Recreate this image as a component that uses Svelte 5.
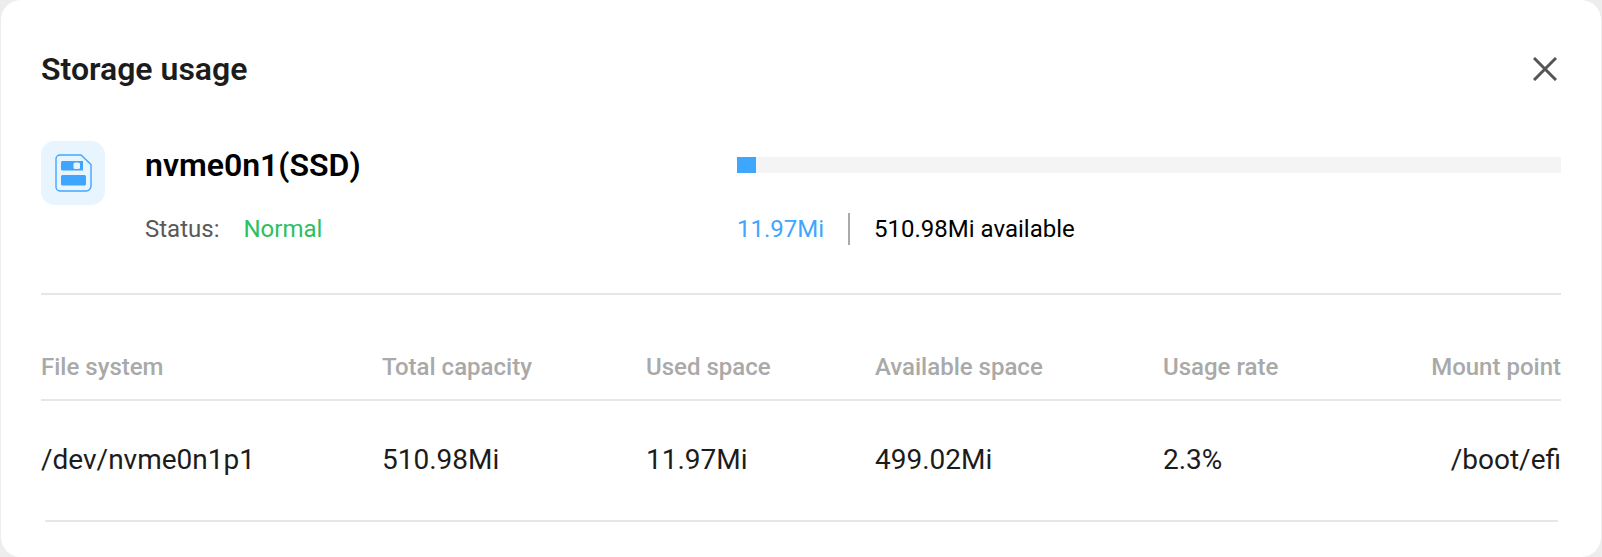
<script>
  const columns = ['File system', 'Total capacity', 'Used space', 'Available space', 'Usage rate', 'Mount point'];
  const rows = [['/dev/nvme0n1p1', '510.98Mi', '11.97Mi', '499.02Mi', '2.3%', '/boot/efi']];
</script>

<div class="backdrop">
  <div class="modal">
    <header class="head">
      <h2>Storage usage</h2>
      <button class="close" aria-label="Close">
        <svg width="24" height="24" viewBox="0 0 24 24"><path d="M1 1 23 23M23 1 1 23" stroke="#555" stroke-width="3" fill="none" /></svg>
      </button>
    </header>

    <section class="disk">
      <div class="disk-icon">
        <svg width="37" height="38" viewBox="0 0 37 38">
          <path d="M5 1h21l10 9.500V32a5 5 0 0 1-5 5H5a4 4 0 0 1-4-4V5a4 4 0 0 1 4-4z" fill="none" stroke="#3fa6ff" stroke-width="1.400" />
          <path d="M7.500 7H28v9.500H7.500A1.500 1.500 0 0 1 6 15V8.500A1.500 1.500 0 0 1 7.500 7z" fill="#3fa6ff" />
          <rect x="18.500" y="8.500" width="6.500" height="6.500" rx="1.500" fill="#e8f4fe" />
          <rect x="6" y="21" width="25" height="10.500" rx="1.500" fill="#3fa6ff" />
        </svg>
      </div>
      <div class="disk-info">
        <div class="disk-name">nvme0n1(SSD)</div>
        <div class="status"><span class="status-label">Status:</span><span class="status-value">Normal</span></div>
      </div>
      <div class="usage">
        <div class="bar"><div class="fill" style="width: 2.3%"></div></div>
        <div class="usage-text">
          <span class="used">11.97Mi</span>
          <span class="sep"></span>
          <span class="avail">510.98Mi available</span>
        </div>
      </div>
    </section>

    <table>
      <thead>
        <tr>
          {#each columns as col}
            <th>{col}</th>
          {/each}
        </tr>
      </thead>
      <tbody>
        {#each rows as row}
          <tr>
            {#each row as cell}
              <td>{cell}</td>
            {/each}
          </tr>
        {/each}
      </tbody>
    </table>
    <div class="table-end"></div>
  </div>
</div>

<style>
  :global(body) {
    margin: 0;
    background: #ededed;
    font-family: Roboto, "Liberation Sans", sans-serif;
  }
  .backdrop {
    width: 1602px;
    height: 557px;
    overflow: hidden;
    box-sizing: border-box;
    padding: 0 1px;
  }
  .modal {
    height: 557px;
    box-sizing: border-box;
    background: #ffffff;
    border-radius: 20px;
    padding: 0 40px;
  }
  .head {
    height: 138px;
    display: flex;
    align-items: center;
    justify-content: space-between;
  }
  h2 {
    margin: 0;
    font-size: 32px;
    font-weight: 600;
    color: #1c1c1c;
  }
  .close {
    padding: 0;
    margin-right: 4px;
    border: 0;
    background: none;
    display: flex;
  }
  .disk {
    display: flex;
    height: 155px;
    border-bottom: 2px solid #e6e6e6;
  }
  .disk-icon {
    width: 64px;
    height: 64px;
    border-radius: 14px;
    background: #e8f4fe;
    display: flex;
    align-items: center;
    justify-content: center;
    margin-top: 3px;
  }
  .disk-info {
    margin-left: 40px;
    width: 592px;
  }
  .disk-name {
    font-size: 32px;
    font-weight: 600;
    color: #000;
    line-height: 40px;
    margin-top: 7px;
  }
  .status {
    font-size: 24px;
    line-height: 32px;
    margin-top: 28px;
    display: flex;
    gap: 24px;
  }
  .status-label {
    color: #595959;
  }
  .status-value {
    color: #2cc05e;
  }
  .usage {
    flex: 1;
    min-width: 0;
  }
  .bar {
    height: 16px;
    background: #f4f4f4;
    margin-top: 19px;
  }
  .fill {
    height: 100%;
    background: #3fa6ff;
  }
  .usage-text {
    display: flex;
    align-items: center;
    margin-top: 40px;
    font-size: 24px;
  }
  .used {
    color: #3fa6ff;
  }
  .sep {
    width: 2px;
    height: 32px;
    background: #aaa;
    margin: 0 24px;
  }
  .avail {
    color: #000;
  }
  table {
    width: 100%;
    border-collapse: collapse;
    table-layout: fixed;
    margin-top: 46px;
    font-size: 24px;
  }
  th {
    text-align: left;
    font-weight: 500;
    color: #a9a9a9;
    height: 59px;
    padding: 0 0 6px;
    box-sizing: border-box;
    border-bottom: 2px solid #e6e6e6;
  }
  td {
    color: #1c1c1c;
    height: 120px;
    padding: 0 0 2px;
    box-sizing: border-box;
    font-size: 28px;
  }
  th:nth-child(1), td:nth-child(1) { width: 341px; }
  th:nth-child(2), td:nth-child(2) { width: 264px; }
  th:nth-child(3), td:nth-child(3) { width: 229px; }
  th:nth-child(4), td:nth-child(4) { width: 288px; }
  th:nth-child(5), td:nth-child(5) { width: 200px; }
  th:last-child, td:last-child {
    text-align: right;
  }
  .table-end {
    height: 2px;
    margin: 0 3px 0 4px;
    background: #e6e6e6;
    border-radius: 2px;
  }
</style>
